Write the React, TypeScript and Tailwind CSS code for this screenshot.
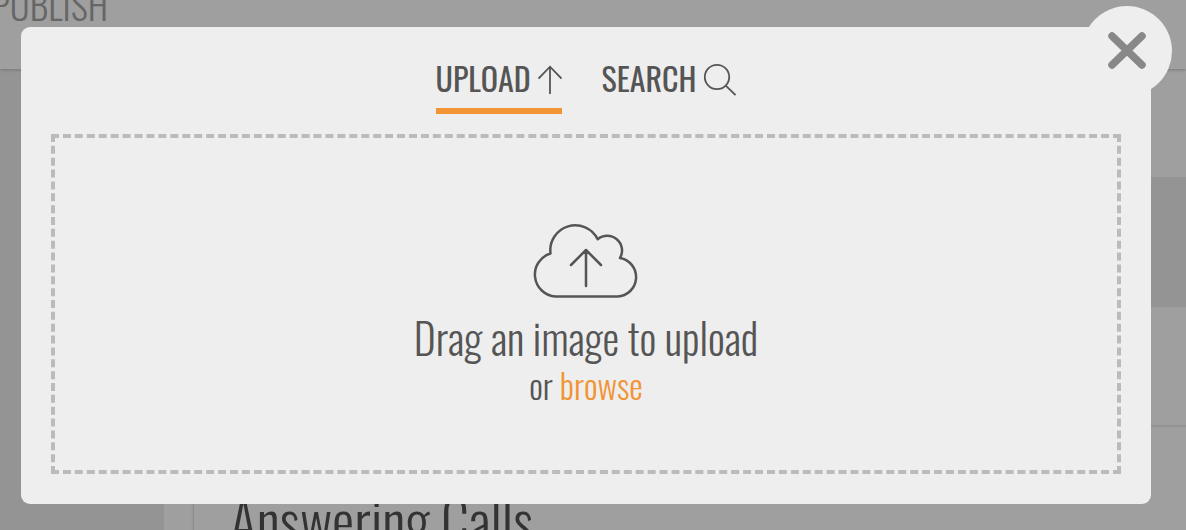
import { useRef, useState, type DragEvent, type ReactNode } from "react";

type Tab = "upload" | "search";

function ArrowUpIcon() {
  return (
    <svg width="24" height="30" viewBox="0 0 24 30" fill="none" stroke="currentColor" strokeWidth="1.8" aria-hidden="true">
      <path d="M12 29V1.500M.5 13.500 12 1.700 23.500 13.500" />
    </svg>
  );
}

function SearchIcon() {
  return (
    <svg width="33" height="34" viewBox="0 0 33 34" fill="none" stroke="currentColor" strokeWidth="1.8" aria-hidden="true">
      <circle cx="14" cy="14" r="12.2" />
      <path d="m23 22.800 9.500 9.200" />
    </svg>
  );
}

function CloudIcon() {
  return (
    <svg
      width="108"
      height="76"
      viewBox="0 0 108 76"
      fill="none"
      stroke="currentColor"
      strokeWidth="2.5"
      strokeLinecap="round"
      strokeLinejoin="round"
      aria-hidden="true"
    >
      <path d="M23.500 73.500H85.500A19.400 19.400 0 0 0 88 35A14.800 14.800 0 0 0 65.700 16.200A25 25 0 0 0 18.500 30.500A22 22 0 0 0 23.500 73.500Z" />
      <path d="M54 63V27.500M39 42 54 27 69 42" />
    </svg>
  );
}

function CloseIcon() {
  return (
    <svg width="38" height="38" viewBox="0 0 38 38" fill="none" stroke="currentColor" strokeWidth="7.5" strokeLinecap="round" aria-hidden="true">
      <path d="m4 4 30 29M34 4 4 33" />
    </svg>
  );
}

function TabButton({ active, onClick, children }: { active: boolean; onClick: () => void; children: ReactNode }) {
  return (
    <button
      type="button"
      role="tab"
      aria-selected={active}
      onClick={onClick}
      className={
        "flex h-15 items-start gap-[7px] border-b-6 text-[32px] leading-12 font-normal " +
        (active ? "border-[#f29434]" : "border-transparent")
      }
    >
      {children}
    </button>
  );
}

function BackgroundPage() {
  return (
    <div className="flex h-screen flex-col overflow-hidden bg-[#9f9f9f]" aria-hidden="true">
      <header className="z-10 h-[69px] shrink-0 bg-[#9f9f9f] shadow-[0_1px_3px_#777]">
        <span className="-mt-[23px] -ml-2 block text-[37px] leading-14 text-[#666666]">PUBLISH</span>
      </header>
      <div className="flex flex-1">
        <aside className="w-41 shrink-0 bg-[#949494]" />
        <main className="ml-[30px] flex flex-1 flex-col shadow-[0_0_3px_#777]">
          <div className="h-27" />
          <div className="h-[130px] bg-[#949494]" />
          <div className="h-30 border-b-2 border-[#949494]" />
          <h1 className="mt-15 pl-9 text-[56px] leading-16 whitespace-nowrap text-[#333333]">Answering Calls</h1>
        </main>
      </div>
    </div>
  );
}

export default function App() {
  const [tab, setTab] = useState<Tab>("upload");
  const [open, setOpen] = useState(true);
  const fileRef = useRef<HTMLInputElement>(null);

  const onDrop = (e: DragEvent) => {
    e.preventDefault();
    if (fileRef.current) fileRef.current.files = e.dataTransfer.files;
  };

  return (
    <div className="relative font-['Oswald','Liberation_Sans_Narrow','Open_Sans',sans-serif] font-light">
      <BackgroundPage />
      {open && (
        <div className="absolute inset-0 z-20 flex pt-[27px] pr-[35px] pb-[26px] pl-[21px]">
          <div role="dialog" aria-label="Add image" className="relative flex flex-1 flex-col rounded-[9px] bg-[#eeeeee] px-[30px] pt-[27px] pb-[30px] text-[#555555]">
            <button
              type="button"
              aria-label="Close"
              onClick={() => setOpen(false)}
              className="absolute -top-[21px] -right-[21px] flex size-[90px] items-center justify-center rounded-full bg-[#eeeeee] text-[#888888]"
            >
              <CloseIcon />
            </button>

            <div role="tablist" className="mb-5 flex justify-center gap-10">
              <TabButton active={tab === "upload"} onClick={() => setTab("upload")}>
                UPLOAD
                <span className="flex h-13 items-center">
                  <ArrowUpIcon />
                </span>
              </TabButton>
              <TabButton active={tab === "search"} onClick={() => setTab("search")}>
                SEARCH
                <span className="flex h-13 items-center">
                  <SearchIcon />
                </span>
              </TabButton>
            </div>

            <div
              onDragOver={(e) => e.preventDefault()}
              onDrop={onDrop}
              className="flex flex-1 flex-col items-center justify-center border-4 border-dashed border-[#bbbbbb] pt-5"
            >
              <CloudIcon />
              <p className="mt-[10px] text-[42px] leading-14">Drag an image to upload</p>
              <p className="text-[34px] leading-10">
                or{" "}
                <button type="button" onClick={() => fileRef.current?.click()} className="text-[#f29434]">
                  browse
                </button>
              </p>
              <input ref={fileRef} type="file" accept="image/*" aria-label="Image file" className="hidden" />
            </div>
          </div>
        </div>
      )}
    </div>
  );
}
